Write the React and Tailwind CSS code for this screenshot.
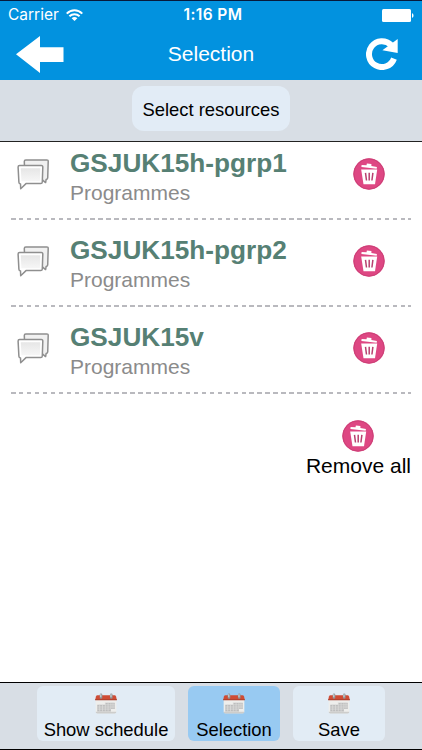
import React from 'react';
import clsx from 'clsx';

const resources = [
    { id: 1, name: 'GSJUK15h-pgrp1', type: 'Programmes' },
    { id: 2, name: 'GSJUK15h-pgrp2', type: 'Programmes' },
    { id: 3, name: 'GSJUK15v', type: 'Programmes' },
];

const tabs = [
    { label: 'Show schedule', width: 'w-[138px]' },
    { label: 'Selection', width: 'w-[92px]', active: true },
    { label: 'Save', width: 'w-[92px]' },
];

function WifiIcon() {
    return (
        <svg className="w-[17px] h-3" viewBox="0 0 16 12" preserveAspectRatio="none" fill="none" stroke="#fff" strokeWidth="1.9">
            <path d="M0.7 4.6C5 0.1 11 0.1 15.3 4.6" />
            <path d="M3.2 7.3C6 4.6 10 4.6 12.8 7.3" />
            <path d="M5.3 9.2C6.9 7.7 9.1 7.7 10.7 9.2L8 12Z" fill="#fff" stroke="none" />
        </svg>
    );
}

function BatteryIcon() {
    return (
        <svg className="w-8 h-[13px]" viewBox="0 0 32 13" fill="#fff">
            <rect width="29" height="13" rx="1.5" />
            <path d="M30 4.2C32 4.8 32 8.2 30 8.8Z" />
        </svg>
    );
}

function BackIcon() {
    return (
        <svg className="w-12 h-[37px]" viewBox="0 0 48 37" fill="#fff">
            <path d="M0 18.3L24 0V11.3H47.5V26H24V37Z" />
        </svg>
    );
}

function RefreshIcon() {
    return (
        <svg className="w-8 h-8" viewBox="0 0 32 32" fill="none">
            <path d="M25.2 7.2A12.9 12.9 0 1 0 28 20.6" stroke="#fff" strokeWidth="6" />
            <path d="M31.7 1V15L16.4 12.2Z" fill="#fff" />
        </svg>
    );
}

function ChatIcon() {
    return (
        <svg className="w-8 h-8" viewBox="0 0 32 32" fill="none" stroke="#8f8f8f" strokeWidth="1.5" strokeLinejoin="round">
            <defs>
                <linearGradient id="bubble" x1="0" y1="0" x2="0" y2="1">
                    <stop offset="0" stopColor="#e6e6e6" />
                    <stop offset="1" stopColor="#f6f6f6" />
                </linearGradient>
            </defs>
            <path d="M8.8 1.9H29.8Q31.3 1.9 31.2 3.4L30.7 20Q30.6 21.4 29.1 21.6L28.6 24.6L25 21.6H9.5Q8 21.6 7.9 20L7.3 3.4Q7.3 1.9 8.8 1.9Z" fill="#f1f1f1" />
            <path d="M2.6 7.6H24.4Q25.9 7.6 25.8 9.1L25.3 24Q25.2 25.5 23.7 25.6H9L3.7 30.7L3.5 25.9Q2 25.7 1.9 24.2L1.1 9.1Q1.1 7.6 2.6 7.6Z" fill="#fff" />
            <path d="M3.8 10.2H23.3L22.9 23.2H4.4Z" fill="url(#bubble)" stroke="none" />
        </svg>
    );
}

function TrashIcon() {
    return (
        <svg className="w-8 h-8" viewBox="0 0 32 32" fill="none">
            <circle cx="16" cy="16" r="15.7" fill="#de4783" />
            <circle cx="16" cy="16" r="15.1" stroke="#cb4076" strokeWidth="1" />
            <path d="M8.6 7L13.5 7.3L13.9 5.4L18.4 6V7.9L23.9 9L23.7 10.8L8.4 8.9Z" fill="#fff" />
            <path d="M8.2 11.6H24.2L22 26.3H10.5Z" fill="#fff" />
            <path d="M12.5 14.8L13.5 22.5M16.2 14.8V22.5M19.9 14.8L18.9 22.5" stroke="#b8406f" strokeWidth="1.5" />
        </svg>
    );
}

function CalendarIcon() {
    return (
        <svg className="w-[26px] h-6" viewBox="0 0 26 24" fill="none">
            <path d="M1.2 7H24.8V21.3Q24.8 23.2 22.9 23.2H3.1Q1.2 23.2 1.2 21.3Z" fill="#eeeeec" />
            <path d="M1.2 21.3H24.8Q24.8 23.3 22.9 23.3H3.1Q1.2 23.3 1.2 21.3Z" fill="#cdcdcb" />
            <path d="M3.2 2.7H22.8Q24 2.7 24.5 4L25.4 7.9H0.6L1.5 4Q2 2.7 3.2 2.7Z" fill="#cf4c35" />
            <path d="M0.6 7.1H25.4V8.3H0.6Z" fill="#a94130" />
            <path d="M12 11H23V18.2H18.6V21H3V13.5H12Z" fill="#bdbdbd" />
            <path d="M3 16H23M3 18.4H18.6M12 13.5H23M5.8 13.5V21M9 13.5V21M12.2 11V21M15.4 11V21M18.6 11V18.2M21 11V18.2" stroke="#e2e2e0" strokeWidth="0.7" />
            <path d="M7.3 2.2V5M19 2.2V5" stroke="#8e9699" strokeWidth="3" strokeLinecap="round" />
            <path d="M7 1.9V4.2M18.7 1.9V4.2" stroke="#c9cfd1" strokeWidth="1.4" strokeLinecap="round" />
        </svg>
    );
}

function ResourceRow({ resource }) {
    return (
        <li>
            <div className="h-[76px] flex items-start pl-1.5 pr-[26px]">
                <div className="mt-4">
                    <ChatIcon />
                </div>
                <div className="flex-1 ml-[21px]">
                    <p className="h-9 pt-1 text-[26.2px] leading-[34px] font-bold text-[#568074] whitespace-nowrap">{resource.name}</p>
                    <p className="text-[21px] leading-[30px] text-[#8b8b8b]">{resource.type}</p>
                </div>
                <button className="mt-4" title="Remove">
                    <TrashIcon />
                </button>
            </div>
            <div className="h-[1.5px] mb-[9.5px] bg-[repeating-linear-gradient(90deg,#b9b9be_0_4.5px,transparent_4.5px_7.95px)]" />
        </li>
    );
}

export default function App() {
    return (
        <div className="w-[422px] h-[750px] flex flex-col bg-white overflow-hidden font-['Liberation_Sans',Arial,sans-serif] text-black">
            {/* Header */}
            <header className="h-20 shrink-0 bg-[#0292df] border-t border-[#071a3c] text-white">
                <div className="h-7 pl-2 pr-2 grid grid-cols-3 items-center font-[Inter,sans-serif]">
                    <div className="flex items-center gap-[7px] text-[15.5px]">
                        <span>Carrier</span>
                        <WifiIcon />
                    </div>
                    <span className="pl-1 text-center text-[15.5px] tracking-[0.4px] font-semibold whitespace-nowrap">1:16 PM</span>
                    <div className="flex justify-end">
                        <BatteryIcon />
                    </div>
                </div>
                <div className="h-[50px] pl-4 pr-6 grid grid-cols-[48px_1fr_32px] items-center">
                    <BackIcon />
                    <h1 className="pr-2 text-[21px] leading-6 text-center">Selection</h1>
                    <RefreshIcon />
                </div>
            </header>

            {/* Toolbar */}
            <div className="h-[62px] shrink-0 bg-[#d8dee5] border-b-[1.5px] border-[#222] flex justify-center pt-1.5">
                <button className="w-[158px] h-[45px] pt-0.5 rounded-xl bg-[#e2ecf6] text-[18.4px] whitespace-nowrap">
                    Select resources
                </button>
            </div>

            {/* Selected resources */}
            <main className="flex-1 px-[11px]">
                <ul>
                    {resources.map((resource) => (
                        <ResourceRow key={resource.id} resource={resource} />
                    ))}
                </ul>
                <button className="mt-[16px] pt-[10px] ml-auto flex flex-col items-center">
                    <TrashIcon />
                    <span className="text-[21px] leading-7">Remove all</span>
                </button>
            </main>

            {/* Bottom tabs */}
            <nav className="h-[68px] shrink-0 bg-[#d8dee5] border-y border-black flex justify-center gap-[13px] pt-[3px]">
                {tabs.map((tab) => (
                    <button
                        key={tab.label}
                        className={clsx(
                            'h-[55px] rounded-md flex flex-col items-center pt-[7px] text-[18.4px] leading-[22px] whitespace-nowrap',
                            tab.width,
                            tab.active ? 'bg-[#98caf2]' : 'bg-[#e2ecf5]'
                        )}
                    >
                        <CalendarIcon />
                        <span className="mt-[5px]">{tab.label}</span>
                    </button>
                ))}
            </nav>
        </div>
    );
}
